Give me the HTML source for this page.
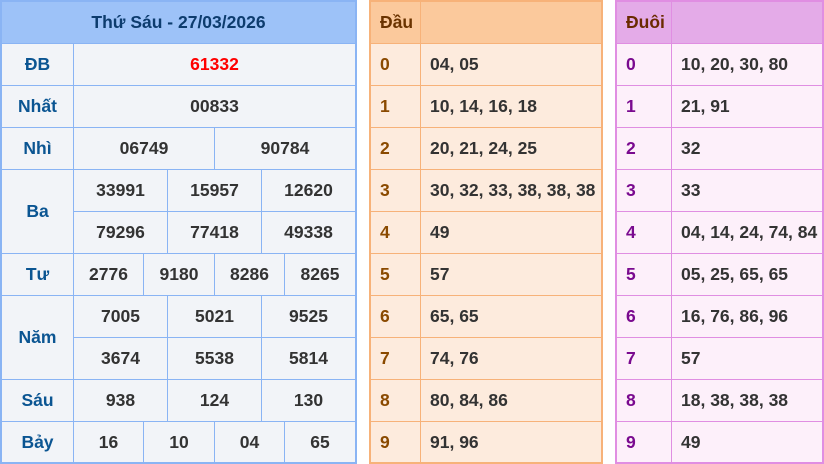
<!DOCTYPE html>
<html><head><meta charset="utf-8"><style>
body{margin:0;width:824px;height:464px;background:#fff;position:relative;overflow:hidden;font-family:"Liberation Sans",sans-serif;font-weight:bold;font-size:17.5px;color:#333}
.t{position:absolute;top:0;height:464px;box-sizing:border-box}
.c{position:absolute;box-sizing:border-box;display:flex;align-items:center;justify-content:center}
#L{left:0;width:357px;border:2px solid #8ab4f4;background:#f2f4f8}
#L .c{border-left:1px solid #8ab4f4;border-top:1px solid #8ab4f4}
#L .h{background:#9dc2f8;color:#0d3c6e;border:none}
#L .lb{color:#0b5592;border-left:none}
#M{left:369px;width:234px;border:2px solid #f7b279;background:#fdebdd}
#M .c{border-top:1px solid #f7b279;justify-content:flex-start;padding-left:9px}
#M .v{border-left:1px solid #f7b279}
#M .h{background:#fbc99c;border:none;color:#6a3300}
#M .h.v{border-left:1px solid #f7b279}
#M .d{color:#8a4a00}
#R{left:615px;width:209px;border:2px solid #e08ee2;background:#fdf0fa}
#R .c{border-top:1px solid #e08ee2;justify-content:flex-start;padding-left:9px}
#R .v{border-left:1px solid #e08ee2}
#R .h{background:#e4abe8;border:none;color:#6a2a00}
#R .h.v{border-left:1px solid #e08ee2}
#R .d{color:#7a0a8f}
</style></head><body>
<div class="t" id="L">
<div class="c h" style="left:0;top:0;width:353px;height:41px">Thứ Sáu - 27/03/2026</div>
<div class="c lb" style="left:0;top:41px;width:71px;height:42px">ĐB</div>
<div class="c" style="left:71px;top:41px;width:282px;height:42px;color:#f00">61332</div>
<div class="c lb" style="left:0;top:83px;width:71px;height:42px">Nhất</div>
<div class="c" style="left:71px;top:83px;width:282px;height:42px">00833</div>
<div class="c lb" style="left:0;top:125px;width:71px;height:42px">Nhì</div>
<div class="c" style="left:71px;top:125px;width:141px;height:42px">06749</div>
<div class="c" style="left:212px;top:125px;width:141px;height:42px">90784</div>
<div class="c lb" style="left:0;top:167px;width:71px;height:84px">Ba</div>
<div class="c" style="left:71px;top:167px;width:94px;height:42px">33991</div>
<div class="c" style="left:165px;top:167px;width:94px;height:42px">15957</div>
<div class="c" style="left:259px;top:167px;width:94px;height:42px">12620</div>
<div class="c" style="left:71px;top:209px;width:94px;height:42px">79296</div>
<div class="c" style="left:165px;top:209px;width:94px;height:42px">77418</div>
<div class="c" style="left:259px;top:209px;width:94px;height:42px">49338</div>
<div class="c lb" style="left:0;top:251px;width:71px;height:42px">Tư</div>
<div class="c" style="left:71px;top:251px;width:70px;height:42px">2776</div>
<div class="c" style="left:141px;top:251px;width:71px;height:42px">9180</div>
<div class="c" style="left:212px;top:251px;width:70px;height:42px">8286</div>
<div class="c" style="left:282px;top:251px;width:71px;height:42px">8265</div>
<div class="c lb" style="left:0;top:293px;width:71px;height:84px">Năm</div>
<div class="c" style="left:71px;top:293px;width:94px;height:42px">7005</div>
<div class="c" style="left:165px;top:293px;width:94px;height:42px">5021</div>
<div class="c" style="left:259px;top:293px;width:94px;height:42px">9525</div>
<div class="c" style="left:71px;top:335px;width:94px;height:42px">3674</div>
<div class="c" style="left:165px;top:335px;width:94px;height:42px">5538</div>
<div class="c" style="left:259px;top:335px;width:94px;height:42px">5814</div>
<div class="c lb" style="left:0;top:377px;width:71px;height:42px">Sáu</div>
<div class="c" style="left:71px;top:377px;width:94px;height:42px">938</div>
<div class="c" style="left:165px;top:377px;width:94px;height:42px">124</div>
<div class="c" style="left:259px;top:377px;width:94px;height:42px">130</div>
<div class="c lb" style="left:0;top:419px;width:71px;height:42px">Bảy</div>
<div class="c" style="left:71px;top:419px;width:70px;height:42px">16</div>
<div class="c" style="left:141px;top:419px;width:71px;height:42px">10</div>
<div class="c" style="left:212px;top:419px;width:70px;height:42px">04</div>
<div class="c" style="left:282px;top:419px;width:71px;height:42px">65</div>
</div>

<div class="t" id="M">
<div class="c h" style="left:0;top:0;width:49px;height:41px">Đầu</div>
<div class="c h v" style="left:49px;top:0;width:181px;height:41px"></div>
<div class="c d" style="left:0;top:41px;width:49px;height:42px">0</div><div class="c v" style="left:49px;top:41px;width:181px;height:42px">04, 05</div>
<div class="c d" style="left:0;top:83px;width:49px;height:42px">1</div><div class="c v" style="left:49px;top:83px;width:181px;height:42px">10, 14, 16, 18</div>
<div class="c d" style="left:0;top:125px;width:49px;height:42px">2</div><div class="c v" style="left:49px;top:125px;width:181px;height:42px">20, 21, 24, 25</div>
<div class="c d" style="left:0;top:167px;width:49px;height:42px">3</div><div class="c v" style="left:49px;top:167px;width:181px;height:42px">30, 32, 33, 38, 38, 38</div>
<div class="c d" style="left:0;top:209px;width:49px;height:42px">4</div><div class="c v" style="left:49px;top:209px;width:181px;height:42px">49</div>
<div class="c d" style="left:0;top:251px;width:49px;height:42px">5</div><div class="c v" style="left:49px;top:251px;width:181px;height:42px">57</div>
<div class="c d" style="left:0;top:293px;width:49px;height:42px">6</div><div class="c v" style="left:49px;top:293px;width:181px;height:42px">65, 65</div>
<div class="c d" style="left:0;top:335px;width:49px;height:42px">7</div><div class="c v" style="left:49px;top:335px;width:181px;height:42px">74, 76</div>
<div class="c d" style="left:0;top:377px;width:49px;height:42px">8</div><div class="c v" style="left:49px;top:377px;width:181px;height:42px">80, 84, 86</div>
<div class="c d" style="left:0;top:419px;width:49px;height:42px">9</div><div class="c v" style="left:49px;top:419px;width:181px;height:42px">91, 96</div>
</div>

<div class="t" id="R">
<div class="c h" style="left:0;top:0;width:54px;height:41px">Đuôi</div>
<div class="c h v" style="left:54px;top:0;width:151px;height:41px"></div>
<div class="c d" style="left:0;top:41px;width:54px;height:42px">0</div><div class="c v" style="left:54px;top:41px;width:151px;height:42px">10, 20, 30, 80</div>
<div class="c d" style="left:0;top:83px;width:54px;height:42px">1</div><div class="c v" style="left:54px;top:83px;width:151px;height:42px">21, 91</div>
<div class="c d" style="left:0;top:125px;width:54px;height:42px">2</div><div class="c v" style="left:54px;top:125px;width:151px;height:42px">32</div>
<div class="c d" style="left:0;top:167px;width:54px;height:42px">3</div><div class="c v" style="left:54px;top:167px;width:151px;height:42px">33</div>
<div class="c d" style="left:0;top:209px;width:54px;height:42px">4</div><div class="c v" style="left:54px;top:209px;width:151px;height:42px">04, 14, 24, 74, 84</div>
<div class="c d" style="left:0;top:251px;width:54px;height:42px">5</div><div class="c v" style="left:54px;top:251px;width:151px;height:42px">05, 25, 65, 65</div>
<div class="c d" style="left:0;top:293px;width:54px;height:42px">6</div><div class="c v" style="left:54px;top:293px;width:151px;height:42px">16, 76, 86, 96</div>
<div class="c d" style="left:0;top:335px;width:54px;height:42px">7</div><div class="c v" style="left:54px;top:335px;width:151px;height:42px">57</div>
<div class="c d" style="left:0;top:377px;width:54px;height:42px">8</div><div class="c v" style="left:54px;top:377px;width:151px;height:42px">18, 38, 38, 38</div>
<div class="c d" style="left:0;top:419px;width:54px;height:42px">9</div><div class="c v" style="left:54px;top:419px;width:151px;height:42px">49</div>
</div>
</body></html>
